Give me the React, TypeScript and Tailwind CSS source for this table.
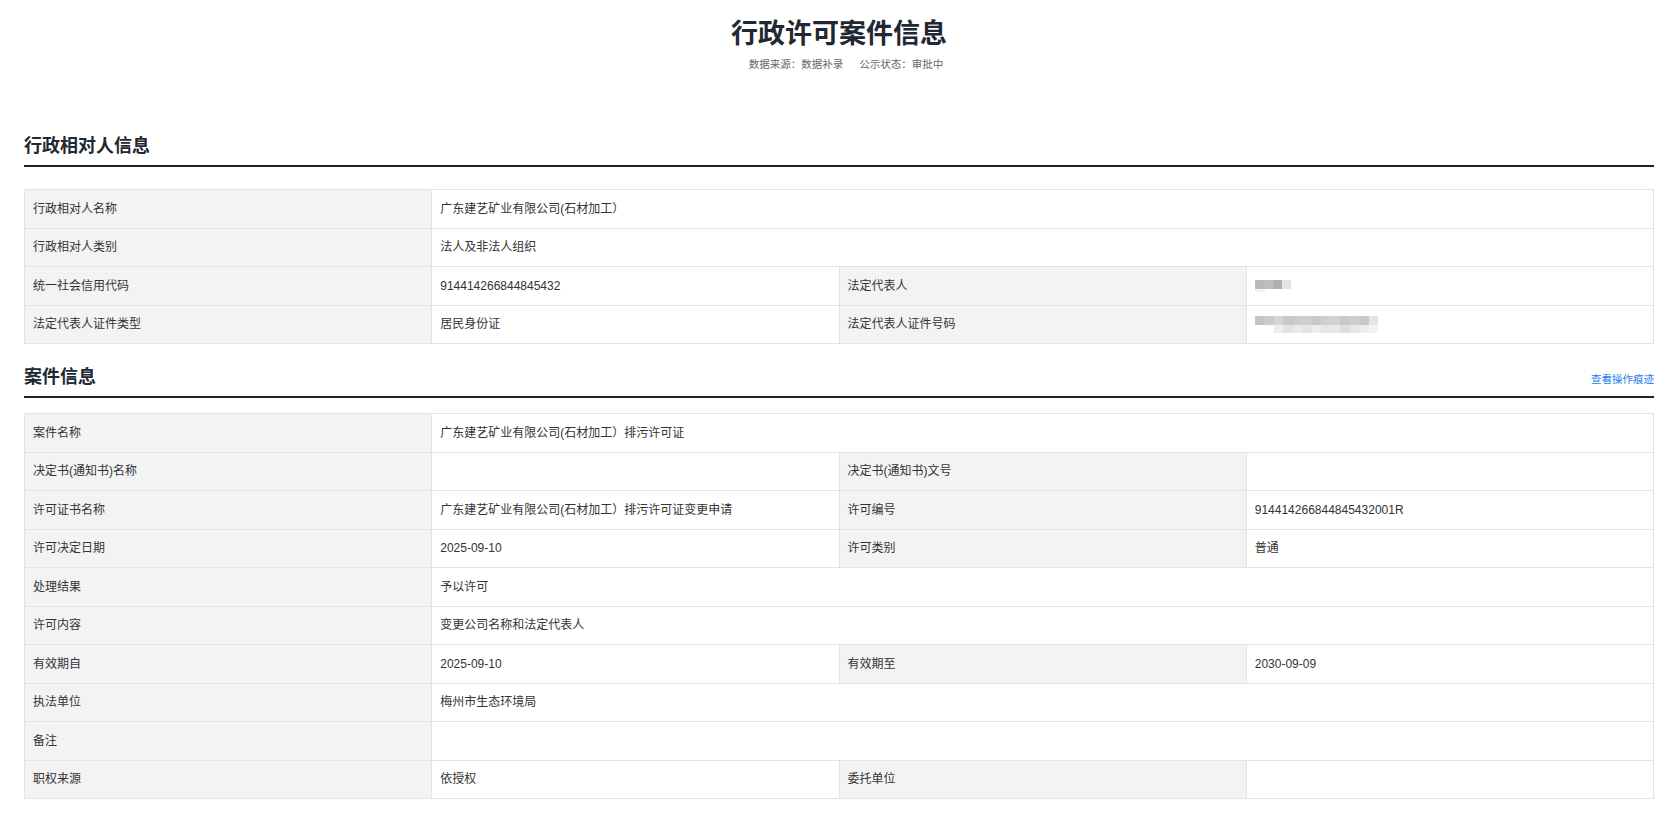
import React from "react";

type Row = [string, React.ReactNode] | [string, React.ReactNode, string, React.ReactNode];

const cellBase =
  "flex items-center px-2 border-r border-b border-[#e1e3e8] whitespace-nowrap overflow-hidden";

function Blur1() {
  return (
    <div className="flex flex-col blur-[0.6px]">
      <div className="flex">
        <div className="w-[9px] h-[9px] bg-[#b9b9bd]" />
        <div className="w-[9px] h-[9px] bg-[#bebec2]" />
        <div className="w-[9px] h-[9px] bg-[#aeb0b4]" />
        <div className="w-[9px] h-[9px] bg-[#e3e6e9]" />
      </div>
      <div className="flex">
        <div className="w-[10px] h-[3px] bg-[#f2f2f3]" />
      </div>
    </div>
  );
}

function Blur2() {
  const top = [
    "#c4c4c7",
    "#c9cbce",
    "#d4d6d9",
    "#c8c8cb",
    "#cbcbce",
    "#cdd0d2",
    "#c6c8cb",
    "#cdd1d5",
    "#cfd1d3",
    "#c7cacd",
    "#ccd0d4",
    "#c7c9cc",
    "#e3e5e8",
  ];
  const bot = [
    "#ffffff",
    "#ffffff",
    "#eeeeef",
    "#e3e3e4",
    "#eaeaeb",
    "#e4e4e5",
    "#ededee",
    "#e6e6e7",
    "#e9e9ea",
    "#dedee0",
    "#e7e7e8",
    "#ececed",
    "#f3f3f4",
  ];
  return (
    <div className="flex flex-col blur-[0.6px]">
      <div className="flex">
        {top.map((c, i) => (
          <div key={i} className="w-[9.5px] h-[9px]" style={{ background: c }} />
        ))}
      </div>
      <div className="flex">
        {bot.map((c, i) => (
          <div key={i} className="w-[9.5px] h-[8px]" style={{ background: c }} />
        ))}
      </div>
    </div>
  );
}

function Table({ rows }: { rows: Row[] }) {
  return (
    <div className="grid grid-cols-4 auto-rows-[38.5px] border-t border-l border-[#e1e3e8] text-[12px] text-[#333]">
      {rows.map((r, i) => {
        if (r.length === 2) {
          return (
            <React.Fragment key={i}>
              <div className={`${cellBase} bg-[#f3f3f3]`}>{r[0]}</div>
              <div className={`${cellBase} bg-white col-span-3`}>{r[1]}</div>
            </React.Fragment>
          );
        }
        return (
          <React.Fragment key={i}>
            <div className={`${cellBase} bg-[#f3f3f3]`}>{r[0]}</div>
            <div className={`${cellBase} bg-white`}>{r[1]}</div>
            <div className={`${cellBase} bg-[#f3f3f3]`}>{r[2]}</div>
            <div className={`${cellBase} bg-white`}>{r[3]}</div>
          </React.Fragment>
        );
      })}
    </div>
  );
}

const company = "广东建艺矿业有限公司(石材加工）";

const rows1: Row[] = [
  ["行政相对人名称", company],
  ["行政相对人类别", "法人及非法人组织"],
  ["统一社会信用代码", "914414266844845432", "法定代表人", <Blur1 />],
  ["法定代表人证件类型", "居民身份证", "法定代表人证件号码", <Blur2 />],
];

const rows2: Row[] = [
  ["案件名称", company + "排污许可证"],
  ["决定书(通知书)名称", "", "决定书(通知书)文号", ""],
  ["许可证书名称", company + "排污许可证变更申请", "许可编号", "914414266844845432001R"],
  ["许可决定日期", "2025-09-10", "许可类别", "普通"],
  ["处理结果", "予以许可"],
  ["许可内容", "变更公司名称和法定代表人"],
  ["有效期自", "2025-09-10", "有效期至", "2030-09-09"],
  ["执法单位", "梅州市生态环境局"],
  ["备注", ""],
  ["职权来源", "依授权", "委托单位", ""],
];

export default function App() {
  return (
    <div className="min-h-[818px] bg-white font-['Liberation_Sans','Noto_Sans_CJK_SC',sans-serif]">
      <div className="ml-[24px] w-[1630px] pb-[18px]">
        <div className="pt-[14px] flex flex-col items-center">
          <h1 className="text-[27px] leading-[40px] font-bold text-[#212832]">行政许可案件信息</h1>
          <div className="mt-[2px] flex pl-[14px] text-[10.5px] leading-[16px] text-[#666]">
            <span>数据来源：数据补录</span>
            <span className="ml-[16px]">公示状态：审批中</span>
          </div>
        </div>

        <div className="mt-[61px] border-b-2 border-[#1f2329] pb-[5px]">
          <h2 className="text-[18px] leading-[27px] font-bold text-[#212832]">行政相对人信息</h2>
        </div>
        <div className="mt-[22px]">
          <Table rows={rows1} />
        </div>

        <div className="mt-[20px] flex items-center justify-between border-b-2 border-[#1f2329] pb-[5px]">
          <h2 className="text-[18px] leading-[27px] font-bold text-[#212832]">案件信息</h2>
          <a className="text-[10.5px] leading-[16px] text-[#1e7ee8] pt-[2px] cursor-pointer">查看操作痕迹</a>
        </div>
        <div className="mt-[15px]">
          <Table rows={rows2} />
        </div>
      </div>
    </div>
  );
}
